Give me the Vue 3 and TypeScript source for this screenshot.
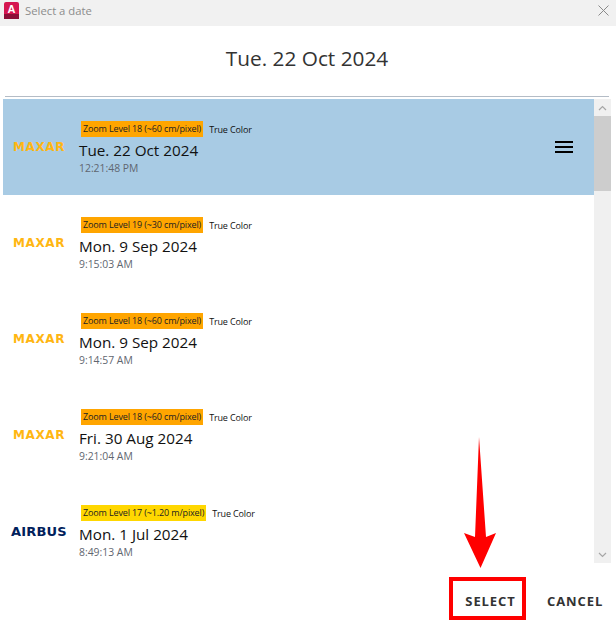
<script setup lang="ts">
interface Capture {
  vendor: 'MAXAR' | 'AIRBUS'
  zoom: string
  tone: 'orange' | 'yellow'
  date: string
  time: string
  active?: boolean
}

const captures: Capture[] = [
  { vendor: 'MAXAR', zoom: 'Zoom Level 18 (~60 cm/pixel)', tone: 'orange', date: 'Tue. 22 Oct 2024', time: '12:21:48 PM', active: true },
  { vendor: 'MAXAR', zoom: 'Zoom Level 19 (~30 cm/pixel)', tone: 'orange', date: 'Mon. 9 Sep 2024', time: '9:15:03 AM' },
  { vendor: 'MAXAR', zoom: 'Zoom Level 18 (~60 cm/pixel)', tone: 'orange', date: 'Mon. 9 Sep 2024', time: '9:14:57 AM' },
  { vendor: 'MAXAR', zoom: 'Zoom Level 18 (~60 cm/pixel)', tone: 'orange', date: 'Fri. 30 Aug 2024', time: '9:21:04 AM' },
  { vendor: 'AIRBUS', zoom: 'Zoom Level 17 (~1.20 m/pixel)', tone: 'yellow', date: 'Mon. 1 Jul 2024', time: '8:49:13 AM' },
]
</script>

<template>
  <div class="dialog">
    <div class="titlebar">
      <svg class="app-icon" width="15" height="17" viewBox="0 0 15 17">
        <rect x="0" y="0" width="15" height="17" rx="2" fill="#d5164f" />
        <rect x="0" y="12" width="15" height="5" fill="#8c0f38" />
        <text x="7.5" y="10.5" text-anchor="middle" class="app-letter">A</text>
      </svg>
      <span class="window-title">Select a date</span>
      <svg class="close" width="11" height="11" viewBox="0 0 11 11">
        <path d="M0.5 0.5 L10.5 10.5 M10.5 0.5 L0.5 10.5" stroke="#8a8a8a" stroke-width="1" fill="none" />
      </svg>
    </div>

    <div class="heading">Tue. 22 Oct 2024</div>
    <div class="divider"></div>

    <div class="list-wrap">
      <div class="list">
        <div
          v-for="(c, i) in captures"
          :key="i"
          class="row"
          :class="{ active: c.active }"
        >
          <div class="logo" :class="c.vendor.toLowerCase()">{{ c.vendor }}</div>
          <div class="info">
            <div class="tags">
              <span class="badge" :class="c.tone">{{ c.zoom }}</span>
              <span class="kind">True Color</span>
            </div>
            <div class="date">{{ c.date }}</div>
            <div class="time">{{ c.time }}</div>
          </div>
          <div v-if="c.active" class="menu">
            <span></span><span></span><span></span>
          </div>
        </div>
      </div>
      <div class="scrollbar">
        <div class="sb-btn">
          <svg width="9" height="6" viewBox="0 0 9 6"><path d="M1 5 L4.5 1.5 L8 5" stroke="#a6a6a6" stroke-width="1.2" fill="none" /></svg>
        </div>
        <div class="thumb"></div>
        <div class="track"></div>
        <div class="sb-btn">
          <svg width="9" height="6" viewBox="0 0 9 6"><path d="M1 1 L4.5 4.5 L8 1" stroke="#a6a6a6" stroke-width="1.2" fill="none" /></svg>
        </div>
      </div>
    </div>

    <div class="actions">
      <button class="btn select">SELECT</button>
      <button class="btn cancel">CANCEL</button>
    </div>

    <svg class="arrow" width="36" height="132" viewBox="0 0 36 132">
      <path d="M17 0 L24 100 L34 96 L18.500 131 L2 96 L13 100 Z" fill="#ff0000" />
    </svg>
  </div>
</template>

<style>
html, body {
  margin: 0;
  background: #fff;
}
</style>

<style scoped>
.dialog {
  position: relative;
  width: 616px;
  height: 623px;
  overflow: hidden;
  background: #fff;
  font-family: "Open Sans", "Noto Sans", sans-serif;
  color: #111;
}

.titlebar {
  display: flex;
  align-items: center;
  height: 26px;
  padding: 0 7px 6px 4px;
  box-sizing: border-box;
  background: #f1f1f1;
}

.app-icon {
  margin-right: 6px;
}

.app-letter {
  font-family: "Liberation Sans", sans-serif;
  font-size: 11px;
  font-weight: 700;
  fill: #fff;
}

.window-title {
  font-size: 11.3px;
  color: #8c8c8c;
}

.close {
  margin-left: auto;
}

.heading {
  height: 70px;
  padding-right: 2px;
  line-height: 64px;
  text-align: center;
  font-size: 20.8px;
  color: #333;
}

.divider {
  height: 1px;
  margin: 0 7px 0 5px;
  background: #b4bcc6;
}

.list-wrap {
  display: flex;
  height: 464px;
  margin: 2px 5px 0 3px;
}

.list {
  flex: 1;
  overflow: hidden;
}

.row {
  display: flex;
  align-items: center;
  height: 96px;
  padding-right: 21px;
  box-sizing: border-box;
}

.row.active {
  background: #a8cbe4;
}

.logo {
  width: 76px;
  flex-shrink: 0;
  padding-left: 10px;
  box-sizing: border-box;
  font-family: "DejaVu Sans", sans-serif;
  font-weight: 700;
  white-space: nowrap;
}

.logo.maxar {
  font-size: 12px;
  letter-spacing: 0.6px;
  color: #ffb612;
}

.logo.airbus {
  padding-left: 8px;
  font-size: 13px;
  letter-spacing: 0.2px;
  color: #00205b;
}

.info {
  display: flex;
  flex-direction: column;
  margin-top: 2px;
}

.tags {
  display: flex;
  align-items: center;
  gap: 6px;
  margin-left: 2px;
  font-size: 9px;
  letter-spacing: -0.14px;
}

.badge {
  height: 16px;
  line-height: 16px;
  padding: 0 2px;
  color: #222;
}

.badge.orange {
  background: #ffa500;
}

.badge.yellow {
  background: #ffd700;
}

.date {
  margin-top: 2px;
  line-height: 22px;
  font-size: 15.25px;
}

.time {
  line-height: 14px;
  font-size: 10.4px;
  color: #5f6670;
}

.menu {
  display: flex;
  flex-direction: column;
  gap: 3px;
  margin-left: auto;
  margin-top: -1px;
}

.menu span {
  display: block;
  width: 18px;
  height: 2px;
  background: #000;
}

.scrollbar {
  display: flex;
  flex-direction: column;
  width: 17px;
  flex-shrink: 0;
  background: #f0f0f0;
}

.sb-btn {
  display: flex;
  align-items: center;
  justify-content: center;
  height: 17px;
}

.thumb {
  height: 75px;
  background: #cdcdcd;
}

.track {
  flex: 1;
}

.actions {
  display: flex;
  align-items: center;
  margin-top: 14px;
  padding-left: 449px;
}

.btn {
  padding: 0;
  background: none;
  border: none;
  font-family: inherit;
  font-size: 13px;
  font-weight: 700;
  letter-spacing: 0.9px;
  color: #333;
}

.select {
  width: 77px;
  height: 43px;
  padding: 4px 0 0 6px;
  box-sizing: border-box;
  border: 4px solid #f00;
}

.cancel {
  margin-left: 21px;
  padding-top: 5px;
}

/* annotation drawn over the dialog */
.arrow {
  position: absolute;
  left: 462px;
  top: 437px;
}
</style>
